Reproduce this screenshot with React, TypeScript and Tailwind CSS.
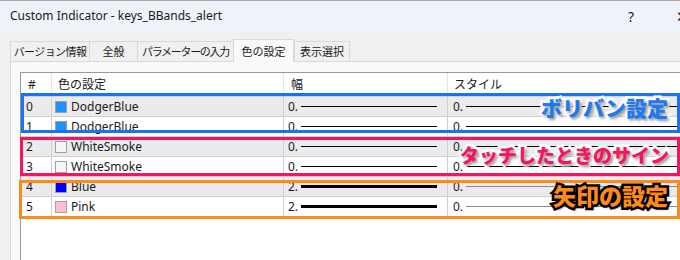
import React from "react";

type Row = {
  id: number;
  name: string;
  swatch: string;
  thick: boolean;
};

const rows: Row[] = [
  { id: 0, name: "DodgerBlue", swatch: "#1e90ff", thick: false },
  { id: 1, name: "DodgerBlue", swatch: "#1e90ff", thick: false },
  { id: 2, name: "WhiteSmoke", swatch: "#f5f5f5", thick: false },
  { id: 3, name: "WhiteSmoke", swatch: "#f5f5f5", thick: false },
  { id: 4, name: "Blue", swatch: "#0000ff", thick: true },
  { id: 5, name: "Pink", swatch: "#ffc0cb", thick: true },
];

const tabs = [
  { label: "バージョン情報", w: "w-[79px]", t: "tracking-[-0.6px]" },
  { label: "全般", w: "w-[48px]", t: "" },
  { label: "パラメーターの入力", w: "w-[96px]", t: "tracking-[-1.3px]" },
  { label: "色の設定", w: "w-[61px]", t: "" },
  { label: "表示選択", w: "w-[56px]", t: "" },
];

const App = () => {
  return (
    <div className="w-[680px] h-[260px] overflow-hidden flex flex-col bg-[#f0f0f0] text-[#1a1a1a] font-['Noto_Sans','Noto_Sans_CJK_JP',sans-serif]">
      {/* title bar */}
      <div className="h-[31px] shrink-0 flex items-center bg-[#eef3f9] border-t border-[#a9a9a9] pl-[10px] text-[12px]">
        <span>Custom Indicator - keys_BBands_alert</span>
        <span className="ml-auto text-[14px] mr-[42px]">?</span>
        <span className="text-[15px] mr-[-6px] w-[10px] overflow-hidden">✕</span>
      </div>

      {/* tabs */}
      <div className="h-[30px] shrink-0 flex items-end pl-[10px] font-['Noto_Sans_CJK_JP',sans-serif] text-[11px] whitespace-nowrap">
        {tabs.map((t, i) =>
          i === 3 ? (
            <div
              key={t.label}
              className={`${t.w} h-[23px] mb-[-1px] relative z-10 flex items-center justify-center bg-[#f9f9f9] border-t border-l border-r border-[#d9d9d9]`}
            >
              {t.label}
            </div>
          ) : (
            <div
              key={t.label}
              className={`${t.w} ${t.t} h-[20px] flex items-center justify-center bg-[#f0f0f0] border-t border-l border-[#d9d9d9] last:border-r`}
            >
              {t.label}
            </div>
          )
        )}
      </div>

      {/* panel */}
      <div className="flex-1 ml-[10px] bg-[#f9f9f9] border-t border-l border-[#d9d9d9] pt-[10px] pl-[9px]">
        <div className="relative h-full bg-white border-t border-l border-[#9a9a9a] text-[12px]">
          {/* header */}
          <div className="flex h-[23px] items-center">
            <div className="w-[31px] h-full flex items-center pl-[7px] border-r border-[#e5e5e5]">#</div>
            <div className="w-[232px] h-full flex items-center pl-[6px] border-r border-[#e5e5e5]">色の設定</div>
            <div className="w-[164px] h-full flex items-center pl-[7px] border-r border-[#e5e5e5]">幅</div>
            <div className="flex-1 h-full flex items-center pl-[6px]">スタイル</div>
          </div>

          {rows.map((r) => (
            <div
              key={r.id}
              className={`flex h-[20px] items-center border-t border-[#d0d0d0] ${r.id % 2 === 0 ? "bg-[#ebebeb]" : "bg-white"}`}
            >
              <div className="w-[31px] h-full flex items-center pl-[5px] border-r border-[#d0d0d0]">{r.id}</div>
              <div className="w-[232px] h-full flex items-center pl-[3px] gap-[4px] border-r border-[#d0d0d0]">
                <span className="w-[12px] h-[12px] border border-[#a0a0a0]" style={{ backgroundColor: r.swatch }} />
                <span>{r.name}</span>
              </div>
              <div className="w-[164px] h-full flex items-center pl-[4px] border-r border-[#d0d0d0]">
                <span className="w-[13px]">{r.thick ? "2." : "0."}</span>
                <div className={`w-[136px] bg-black ${r.thick ? "h-[3px]" : "h-px"}`} />
              </div>
              <div className="flex-1 h-full flex items-center pl-[5px]">
                <span className="w-[13px]">0.</span>
                <div className={`flex-1 h-px ${r.thick ? "bg-[#8a8a8a]" : "bg-black"}`} />
              </div>
            </div>
          ))}

          {/* annotation boxes */}
          <div className="absolute left-0 top-[20px] w-[659px] h-[40px] border-[3px] border-[#1a74f2]" />
          <div className="absolute left-[-1px] top-[64px] w-[660px] h-[39px] border-[3px] border-[#f5145f]" />
          <div className="absolute left-[-2px] top-[107px] w-[661px] h-[39px] border-[3px] border-[#ff8a1c]" />

          {/* annotation labels */}
          <div className="absolute right-[12px] top-[24px] leading-none text-[21px] font-black text-[#1d7af5] font-['Noto_Sans_CJK_JP',sans-serif] [-webkit-text-stroke:5px_white] [paint-order:stroke_fill] [text-shadow:2px_2px_3px_rgba(0,0,0,0.45)]">
            ボリバン設定
          </div>
          <div className="absolute right-[11px] top-[72px] leading-none text-[19px] font-black text-[#f5145f] font-['Noto_Sans_CJK_JP',sans-serif] [-webkit-text-stroke:5px_white] [paint-order:stroke_fill] [text-shadow:2px_2px_3px_rgba(0,0,0,0.45)]">
            タッチしたときのサイン
          </div>
          <div className="absolute right-[12px] top-[111px] leading-none text-[23px] font-black text-[#ff8a1c] font-['Noto_Sans_CJK_JP',sans-serif] [-webkit-text-stroke:5px_black] [paint-order:stroke_fill] [text-shadow:2px_2px_3px_rgba(0,0,0,0.5)]">
            矢印の設定
          </div>
        </div>
      </div>
    </div>
  );
};

export default App;
